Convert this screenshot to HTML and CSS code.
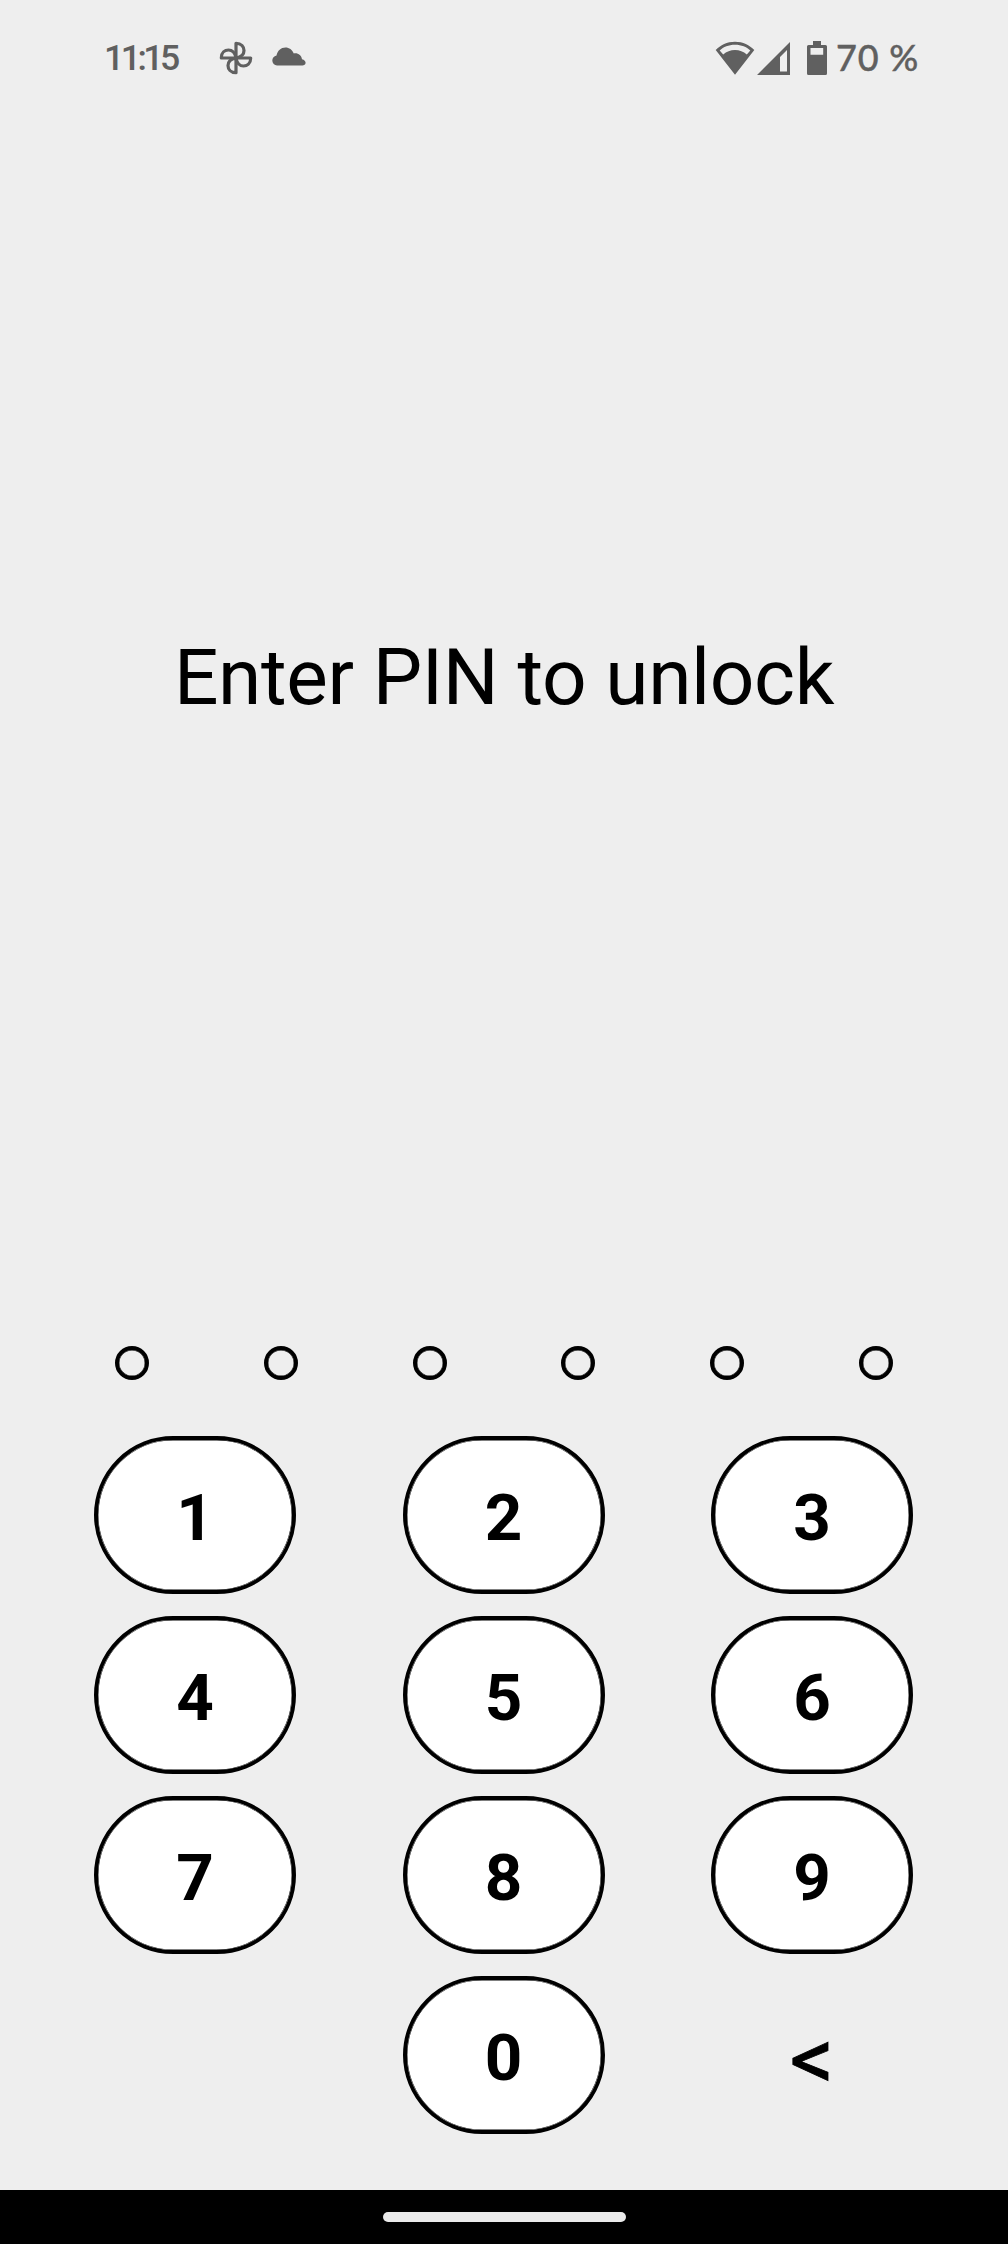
FILE: index.html
```html
<!DOCTYPE html>
<html lang="en">
<head>
<meta charset="utf-8">
<title>Enter PIN</title>
<link rel="stylesheet" href="styles.css">
</head>
<body>
<div class="screen">
  <header class="status-bar">
    <span class="clock">11:15</span>
    <svg class="pinwheel" viewBox="0 0 34 34"><g fill="none" stroke="#606060" stroke-width="3.2" stroke-linejoin="round"><path d="M17 17V2.3C22.5 2.3 25 6 25 9.5C25 13 22.5 15.8 17.5 17"/><path d="M17 17H31.7C31.7 22.5 28 25 24.5 25C21 25 18.2 22.5 17 17.5"/><path d="M17 17V31.7C11.5 31.7 9 28 9 24.5C9 21 11.5 18.2 16.5 17"/><path d="M17 17H2.3C2.3 11.5 6 9 9.5 9C13 9 15.8 11.5 17 16.5"/></g></svg>
    <svg class="cloud" viewBox="0 0 34 19"><path fill="#606060" d="M5 18.5A5 5 0 0 1 .3 13.5C.3 11 2 9 4.5 8.5C5.5 3.5 9 .5 13.5 .5C17.2 .5 20.3 2.8 21.8 6.500C26 5.700 29.500 8.500 30 12.200C32.400 12.700 33.600 14.200 33.600 15.800C33.600 17.500 32 18.500 30.400 18.500Z"/></svg>
    <div class="system">
      <svg class="wifi" viewBox="0 0 40 34"><path fill="#606060" fill-rule="evenodd" d="M20 .7C28 .7 34.500 4 39.300 9L20 33.700L.7 9C5.500 4 12 .7 20 .7ZM20 3.800C13.500 3.800 8.500 6 4.700 9.500L8.200 13.500C11.500 10.500 15.500 8.900 20 8.900C24.500 8.900 28.500 10.500 31.800 13.500L35.300 9.500C31.500 6 26.500 3.800 20 3.800Z"/></svg>
      <svg class="signal" viewBox="0 0 33 33"><path fill="#606060" fill-rule="evenodd" d="M33 0V33H0ZM30 8L23 15V29.500H30Z"/></svg>
      <svg class="battery" viewBox="0 0 20 34"><path fill="#606060" fill-rule="evenodd" d="M6 0H14V4H18.500Q20 4 20 5.500V32.500Q20 34 18.500 34H1.500Q0 34 0 32.500V5.500Q0 4 1.500 4H6ZM3.500 7V13.800H16.200V7Z"/></svg>
      <span class="level">70 %</span>
    </div>
  </header>
  <main class="lock">
    <h1 class="title">Enter PIN to unlock</h1>
    <div class="dots"><i class="dot"></i><i class="dot"></i><i class="dot"></i><i class="dot"></i><i class="dot"></i><i class="dot"></i></div>
    <div class="keypad">
      <button class="key">1</button><button class="key">2</button><button class="key">3</button>
      <button class="key">4</button><button class="key">5</button><button class="key">6</button>
      <button class="key">7</button><button class="key">8</button><button class="key">9</button>
      <button class="key zero">0</button><button class="key back">&lt;</button>
    </div>
  </main>
  <footer class="nav"><div class="handle"></div></footer>
</div>
</body>
</html>
```
FILE: styles.css
```css
* { box-sizing: border-box; }
body { margin: 0; background: #eee; font-family: Roboto, sans-serif; color: #000; }
.screen { width: 1008px; height: 2244px; display: flex; flex-direction: column; }
.status-bar { height: 116px; padding: 0 88px 0 104px; display: flex; align-items: center; color: #606060; }
.clock { width: 115px; font-size: 35.6px; font-weight: 500; letter-spacing: -3.5px; }
.pinwheel { width: 34px; height: 34px; }
.cloud { width: 34px; height: 19px; margin-left: 19px; margin-top: -3px; }
.system { margin-left: auto; display: flex; align-items: center; }
.wifi { width: 40px; height: 34px; }
.signal { width: 33px; height: 33px; margin-left: 2px; }
.battery { width: 20px; height: 34px; margin-left: 17px; margin-top: -1px; }
.level { width: 83px; margin: -2px 0 0 10px; font-family: Lato, sans-serif; font-size: 36px; font-weight: 500; letter-spacing: 0.8px; text-indent: -1px; -webkit-text-stroke: 0.4px #606060; white-space: nowrap; }
.lock { flex: 1; display: flex; flex-direction: column; }
.title { margin: 515px 0 0; height: 92px; line-height: 92px; font-size: 78.4px; font-weight: 400; letter-spacing: -0.37px; text-align: center; }
.dots { display: flex; justify-content: space-between; margin: 623px 115px 0; }
.dot { width: 34px; height: 34px; border: 4px solid #000; border-radius: 50%; box-shadow: inset 0 0 0 0.4px #000; }
.keypad { display: grid; grid-template-columns: repeat(3, 202px); grid-auto-rows: 158px; justify-content: space-between; row-gap: 22px; margin: 56px 95px 0 94px; }
.key { padding: 5px 0 0; border: 4px solid #000; border-radius: 79px; background: #fff; color: #000; font: 700 65.500px Roboto, sans-serif; box-shadow: inset 0 0 0 0.4px #000; }
.zero { grid-column: 2; }
.back { padding: 6px 0 0; border-color: transparent; background: transparent; box-shadow: none; font-size: 88px; font-weight: 400; -webkit-text-stroke: 0.8px #000; }
.nav { height: 54px; background: #000; display: flex; align-items: center; justify-content: center; }
.handle { width: 243px; height: 10px; border-radius: 5px; background: #ebebeb; }
```
